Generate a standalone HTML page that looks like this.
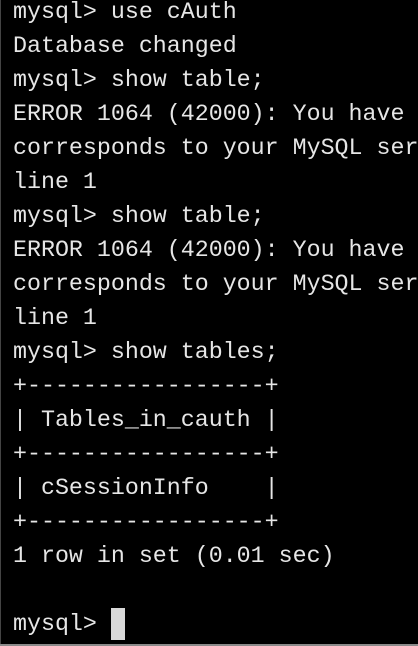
<!DOCTYPE html>
<html><head><meta charset="utf-8"><style>
html,body{margin:0;padding:0;background:#000;width:418px;height:646px;overflow:hidden;position:relative}
pre{position:absolute;left:13px;top:-5px;margin:0;font-family:"Liberation Mono",monospace;font-size:23.3px;line-height:34px;color:#e6e6e6;white-space:pre}
.cur{display:inline-block;width:14px;height:32px;background:#d8d8d8;vertical-align:top;margin-top:1px}
.l{position:absolute;left:0;top:0;width:1px;height:646px;background:#444}
.b{position:absolute;left:0;bottom:0;width:418px;height:2px;background:#8a8a8a}
</style></head><body>
<div class="l"></div>
<pre>mysql&gt; use cAuth
Database changed
mysql&gt; show table;
ERROR 1064 (42000): You have
corresponds to your MySQL ser
line 1
mysql&gt; show table;
ERROR 1064 (42000): You have
corresponds to your MySQL ser
line 1
mysql&gt; show tables;
+-----------------+
| Tables_in_cauth |
+-----------------+
| cSessionInfo    |
+-----------------+
1 row in set (0.01 sec)

mysql&gt; <span class="cur"></span></pre>
<div class="b"></div>
</body></html>
